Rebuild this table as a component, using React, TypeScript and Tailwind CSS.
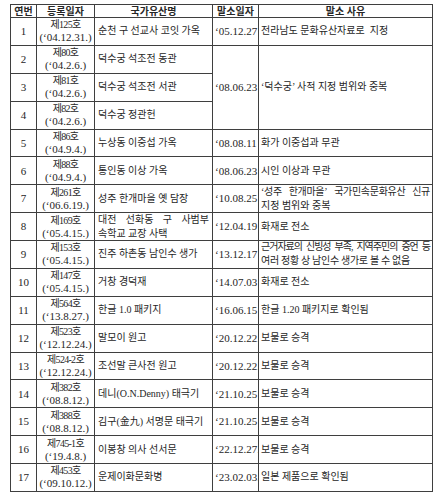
import React from 'react';

type Row = {
  no: number;
  code: string;
  regDate: string;
  name: React.ReactNode;
  date?: string;
  reason?: React.ReactNode;
  span?: boolean;
  skip?: boolean;
};

const Spread = ({ words, className = '' }: { words: string[]; className?: string }) => (
  <div className={`flex justify-between whitespace-nowrap ${className}`}>
    {words.map((w, i) => (
      <span key={i}>{w}</span>
    ))}
  </div>
);

const rows: Row[] = [
  { no: 1, code: '제125호', regDate: '(‘04.12.31.)', name: '순천 구 선교사 코잇 가옥', date: '‘05.12.27', reason: '전라남도 문화유산자료로  지정' },
  { no: 2, code: '제80호', regDate: '(‘04.2.6.)', name: '덕수궁 석조전 동관', date: '‘08.06.23', reason: '‘덕수궁’ 사적 지정 범위와 중복', span: true },
  { no: 3, code: '제81호', regDate: '(‘04.2.6.)', name: '덕수궁 석조전 서관', skip: true },
  { no: 4, code: '제82호', regDate: '(‘04.2.6.)', name: '덕수궁 정관헌', skip: true },
  { no: 5, code: '제86호', regDate: '(‘04.9.4.)', name: '누상동 이중섭 가옥', date: '‘08.08.11', reason: '화가 이중섭과 무관' },
  { no: 6, code: '제88호', regDate: '(‘04.9.4.)', name: '통인동 이상 가옥', date: '‘08.06.23', reason: '시인 이상과 무관' },
  {
    no: 7,
    code: '제261호',
    regDate: '(‘06.6.19.)',
    name: '성주 한개마을 옛 담장',
    date: '‘10.08.25',
    reason: (
      <>
        <Spread words={['‘성주', '한개마을’', '국가민속문화유산', '신규']} className="tracking-[-0.3px]" />
        <div>지정 범위와 중복</div>
      </>
    ),
  },
  {
    no: 8,
    code: '제169호',
    regDate: '(‘05.4.15.)',
    name: (
      <>
        <Spread words={['대전', '선화동', '구', '사범부']} />
        <div>속학교 교장 사택</div>
      </>
    ),
    date: '‘12.04.19',
    reason: '화재로 전소',
  },
  {
    no: 9,
    code: '제153호',
    regDate: '(‘05.4.15.)',
    name: '진주 하촌동 남인수 생가',
    date: '‘13.12.17',
    reason: (
      <>
        <Spread words={['근거자료의', '신빙성', '부족,', '지역주민의', '증언', '등']} className="tracking-[-1px]" />
        <div className="whitespace-nowrap tracking-[-0.3px]">여러 정황 상 남인수 생가로 볼 수 없음</div>
      </>
    ),
  },
  { no: 10, code: '제147호', regDate: '(‘05.4.15.)', name: '거창 경덕재', date: '‘14.07.03', reason: '화재로 전소' },
  { no: 11, code: '제564호', regDate: '(‘13.8.27.)', name: '한글 1.0 패키지', date: '‘16.06.15', reason: '한글 1.20 패키지로 확인됨' },
  { no: 12, code: '제523호', regDate: '(‘12.12.24.)', name: '말모이 원고', date: '‘20.12.22.', reason: '보물로 승격' },
  { no: 13, code: '제524-2호', regDate: '(‘12.12.24.)', name: '조선말 큰사전 원고', date: '‘20.12.22.', reason: '보물로 승격' },
  { no: 14, code: '제382호', regDate: '(‘08.8.12.)', name: '데니(O.N.Denny) 태극기', date: '‘21.10.25', reason: '보물로 승격' },
  { no: 15, code: '제388호', regDate: '(‘08.8.12.)', name: '김구(金九) 서명문 태극기', date: '‘21.10.25', reason: '보물로 승격' },
  { no: 16, code: '제745-1호', regDate: '(‘19.4.8.)', name: '이봉창 의사 선서문', date: '‘22.12.27.', reason: '보물로 승격' },
  { no: 17, code: '제453호', regDate: '(‘09.10.12.)', name: '운제이화문화병', date: '‘23.02.03.', reason: '일본 제품으로 확인됨' },
];

const cell = 'border-r border-b border-[#3f3f3f] flex flex-col justify-center overflow-hidden';

export default function App() {
  return (
    <div className="w-[445px] h-[500px] bg-white pt-[4px] pl-[10px] text-[#262626] font-['Liberation_Serif','Noto_Sans_CJK_KR',serif]">
      <div className="grid w-[423px] grid-cols-[26px_58px_118px_46px_174px] grid-rows-[13px_repeat(17,27.88px)] border-t border-l border-[#3f3f3f]">
        {['연번', '등록일자', '국가유산명', '말소일자', '말소 사유'].map((h) => (
          <div key={h} className={`${cell} items-center text-[10px] leading-[11px] font-bold whitespace-pre`}>
            {h}
          </div>
        ))}
        {rows.map((r) => (
          <React.Fragment key={r.no}>
            <div className={`${cell} items-center text-[11px]`}>{r.no}</div>
            <div className={`${cell} items-center leading-[13px] whitespace-nowrap`}>
              <div className="text-[10px] tracking-[-0.7px]">{r.code}</div>
              <div className="text-[11px]">{r.regDate}</div>
            </div>
            <div className={`${cell} px-[3px] text-[10px] leading-[14px]`}>{r.name}</div>
            {!r.skip && (
              <>
                <div className={`${cell} pl-[2px] text-[11px] whitespace-nowrap ${r.span ? 'row-span-3' : ''}`}>
                  {r.date}
                </div>
                <div className={`${cell} px-[2px] text-[10px] leading-[14px] whitespace-pre ${r.span ? 'row-span-3' : ''}`}>
                  {r.reason}
                </div>
              </>
            )}
          </React.Fragment>
        ))}
      </div>
    </div>
  );
}
